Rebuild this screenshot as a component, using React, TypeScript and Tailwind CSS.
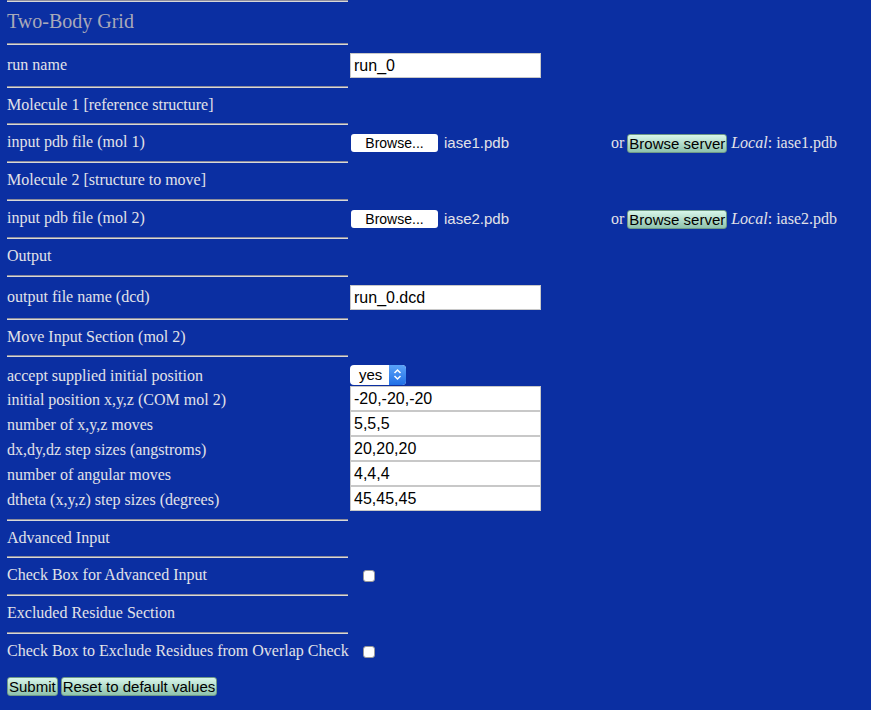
import React from 'react';

const serif = { fontFamily: '"Liberation Serif", "Times New Roman", serif' };
const sans = { fontFamily: '"Liberation Sans", Arial, sans-serif' };

function Rule() {
  return <div className="w-[341px] h-[2px] border-t border-t-[#8c8c9c] border-b border-b-[#d8d8d8]" />;
}

function Row({ h, label, tight, children }: { h: string; label: string; tight?: boolean; children?: React.ReactNode }) {
  return (
    <div className={`flex items-center ${h}`}>
      <div className={`w-[343px] shrink-0 text-[16px] leading-none text-[#e2e2e8] ${tight ? 'pt-[2px]' : 'pb-[2px]'}`}>
        {label}
      </div>
      {children}
    </div>
  );
}

function TextInput({ value }: { value: string }) {
  return (
    <div
      className="w-[191px] h-[25px] bg-white border border-[#c8c8c8] flex items-center pl-[3px] text-[16px] text-black"
      style={sans}
    >
      {value}
    </div>
  );
}

function GreenButton({ children }: { children: React.ReactNode }) {
  return (
    <button
      className="h-[19px] px-[1px] rounded-[3px] bg-gradient-to-b from-[#d8f6ea] to-[#8fc3ad] text-[15px] leading-none text-black border border-[#6f9a88]"
      style={sans}
    >
      {children}
    </button>
  );
}

function FileRow({ label, file }: { label: string; file: string }) {
  return (
    <Row h="h-[36px]" label={label}>
      <div className="flex items-center ml-[1px]">
        <button
          className="w-[87px] h-[18px] bg-white rounded-[3px] text-[14px] leading-none text-black"
          style={sans}
        >
          Browse...
        </button>
        <span className="ml-[6px] text-[15px] text-[#e2e2e8]" style={sans}>
          {file}
        </span>
      </div>
      <div className="ml-auto mr-[34px] flex items-center gap-[2px] text-[16px] text-[#e2e2e8]">
        <span className="mr-[1px]">or</span>
        <GreenButton>Browse server</GreenButton>
        <span className="ml-[2px]">
          <i className="font-medium">Local</i>: {file}
        </span>
      </div>
    </Row>
  );
}

function Checkbox() {
  return <div className="ml-[13px] w-[12px] h-[12px] bg-white rounded-[3px] border border-[#9a9a9a]" />;
}

export default function App() {
  const grid = [
    ['initial position x,y,z (COM mol 2)', '-20,-20,-20'],
    ['number of x,y,z moves', '5,5,5'],
    ['dx,dy,dz step sizes (angstroms)', '20,20,20'],
    ['number of angular moves', '4,4,4'],
    ['dtheta (x,y,z) step sizes (degrees)', '45,45,45'],
  ];

  return (
    <div className="min-h-screen w-full bg-[#0b2fa2] pl-[7px]" style={serif}>
      <Rule />
      <div className="h-[41px] flex items-center text-[20px] text-[#a9a9b9] pb-[3px]">Two-Body Grid</div>
      <Rule />
      <Row h="h-[41px]" label="run name">
        <TextInput value="run_0" />
      </Row>
      <Rule />
      <Row h="h-[35px]" label="Molecule 1 [reference structure]" />
      <Rule />
      <FileRow label="input pdb file (mol 1)" file="iase1.pdb" />
      <Rule />
      <Row h="h-[36px]" label="Molecule 2 [structure to move]" />
      <Rule />
      <FileRow label="input pdb file (mol 2)" file="iase2.pdb" />
      <Rule />
      <Row h="h-[36px]" label="Output" />
      <Rule />
      <Row h="h-[41px]" label="output file name (dcd)">
        <TextInput value="run_0.dcd" />
      </Row>
      <Rule />
      <Row h="h-[35px]" label="Move Input Section (mol 2)" />
      <Rule />
      <div className="pt-[6px]">
        <Row h="h-[23px]" label="accept supplied initial position" tight>
          <div className="flex h-[20px] w-[56px] rounded-[4px] overflow-hidden bg-white" style={sans}>
            <div className="flex-1 flex items-center pl-[9px] text-[15px] leading-none text-black">yes</div>
            <div className="w-[17px] bg-gradient-to-b from-[#5aa2f8] to-[#1f6fe6] flex items-center justify-center">
              <svg width="9" height="13" viewBox="0 0 9 13" fill="none" stroke="white" strokeWidth="1.5">
                <path d="M1.5 5 L4.5 2 L7.5 5" />
                <path d="M1.5 8 L4.5 11 L7.5 8" />
              </svg>
            </div>
          </div>
        </Row>
        {grid.map(([label, value]) => (
          <Row key={label} h="h-[25px]" label={label} tight>
            <TextInput value={value} />
          </Row>
        ))}
      </div>
      <div className="h-[8px]" />
      <Rule />
      <Row h="h-[35px]" label="Advanced Input" />
      <Rule />
      <Row h="h-[36px]" label="Check Box for Advanced Input">
        <Checkbox />
      </Row>
      <Rule />
      <Row h="h-[36px]" label="Excluded Residue Section" />
      <Rule />
      <Row h="h-[36px]" label="Check Box to Exclude Residues from Overlap Check">
        <Checkbox />
      </Row>
      <div className="flex gap-[3px] pt-[7px] pb-[14px]">
        <GreenButton>Submit</GreenButton>
        <GreenButton>Reset to default values</GreenButton>
      </div>
    </div>
  );
}
